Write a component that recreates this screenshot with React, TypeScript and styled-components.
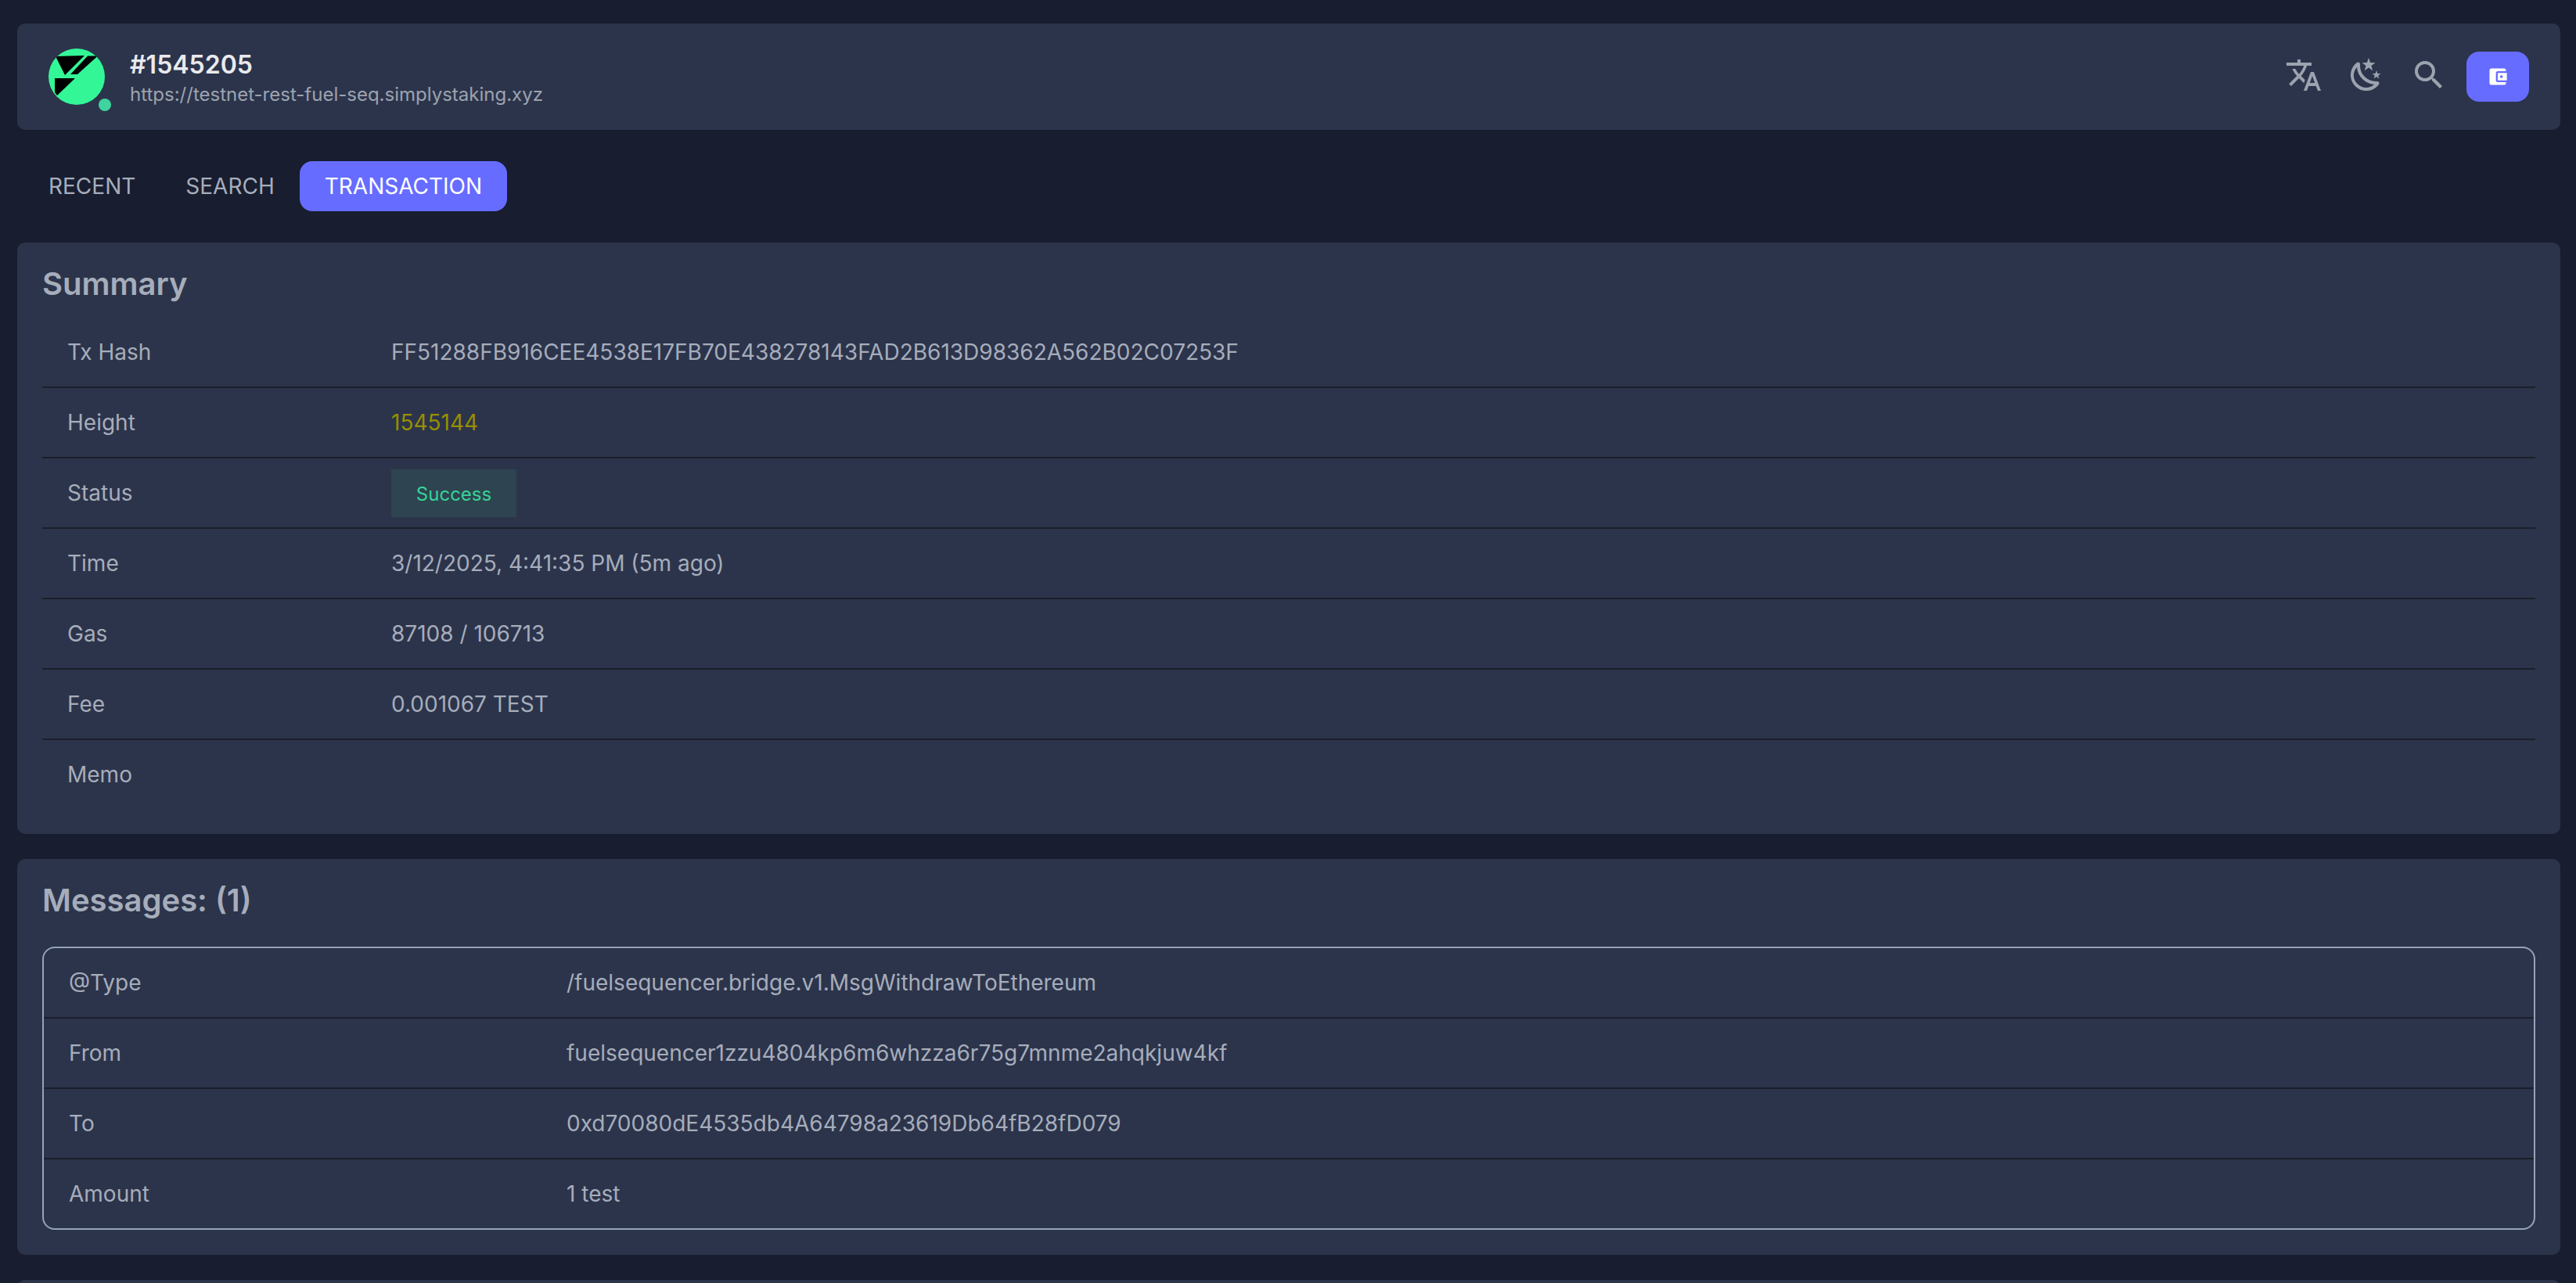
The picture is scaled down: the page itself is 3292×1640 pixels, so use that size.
import React from "react";
import styled, { createGlobalStyle } from "styled-components";

const Global = createGlobalStyle`
  html, body { margin: 0; padding: 0; background: #181d2f; }
  body { font-family: Inter, "Noto Sans", sans-serif; color: #a6adbb; -webkit-font-smoothing: antialiased; }
  * { box-sizing: border-box; }
`;

const Page = styled.div`
  height: 1640px;
  overflow: hidden;
  padding: 30px 20px 0 22px;
  display: flex;
  flex-direction: column;
`;

const Card = styled.section`
  background: #2c344b;
  border-radius: 10px;
  flex-shrink: 0;
`;

const TopBar = styled(Card)`
  height: 136px;
  display: flex;
  align-items: center;
  padding: 0 40px;
`;

const Brand = styled.div`
  display: flex;
  align-items: center;
  flex: 1;
  gap: 32px;
`;

const LogoWrap = styled.div`
  position: relative;
  width: 72px;
  height: 72px;
`;

const LogoSvg = styled.svg`
  display: block;
  width: 72px;
  height: 72px;
`;

const OnlineDot = styled.span`
  position: absolute;
  left: 64px;
  top: 64px;
  width: 16px;
  height: 16px;
  border-radius: 50%;
  background: #3fd39f;
`;

const BrandText = styled.div`
  display: flex;
  flex-direction: column;
  margin-top: 6px;
`;

const ChainHeight = styled.div`
  font-size: 32px;
  font-weight: 600;
  line-height: 40px;
  color: #e9eaee;
`;

const ChainUrl = styled.div`
  font-size: 24px;
  line-height: 36px;
  color: #9ca3af;
`;

const IconButton = styled.button`
  width: 80px;
  height: 64px;
  background: none;
  border: 0;
  padding: 0 0 4px;
  display: flex;
  align-items: center;
  justify-content: center;
  color: #9ca3af;
`;

const WalletButton = styled.button`
  width: 80px;
  height: 64px;
  margin-left: 8px;
  border: 0;
  padding: 0;
  border-radius: 16px;
  background: #666cff;
  color: #fff;
  display: flex;
  align-items: center;
  justify-content: center;
`;

const Tabs = styled.nav`
  display: flex;
  margin: 40px 0;
  padding-left: 8px;
`;

const Tab = styled.a<{ $active?: boolean }>`
  height: 64px;
  padding: 0 32px;
  border-radius: 16px;
  display: flex;
  align-items: center;
  font-size: 28px;
  background: ${(p) => (p.$active ? "#666cff" : "transparent")};
  color: ${(p) => (p.$active ? "#ffffff" : "#a6adbb")};
`;

const Panel = styled(Card)`
  padding: 32px;
  margin-bottom: 32px;
`;

const PanelTitle = styled.h2<{ $gap: number }>`
  margin: 0 0 ${(p) => p.$gap}px;
  font-size: 40px;
  line-height: 42px;
  font-weight: 600;
  color: #a6adbb;
`;

const MessageBox = styled.div`
  border: 2px solid #94a3b8;
  border-radius: 16px;
  overflow: hidden;
`;

const Row = styled.div<{ $labelWidth: number }>`
  display: grid;
  grid-template-columns: ${(p) => p.$labelWidth}px 1fr;
  align-items: center;
  height: 90px;
  border-bottom: 2px solid #1b1f2a;
  font-size: 28px;
  color: #a6adbb;
  &:last-child {
    height: 88px;
    border-bottom: 0;
  }
`;

const Cell = styled.div`
  padding: 0 32px;
`;

const HeightLink = styled.span`
  color: #968f00;
`;

const Badge = styled.span`
  display: flex;
  width: 160px;
  height: 61px;
  padding-top: 2px;
  align-items: center;
  justify-content: center;
  font-size: 24px;
  color: #36d399;
  background: #2e4450;
`;

const Stub = styled(Card)`
  height: 60px;
`;

const Path = ({ d, size = 48 }: { d: string; size?: number }) => (
  <svg width={size} height={size} viewBox="0 0 24 24" fill="currentColor">
    <path d={d} fillRule="evenodd" />
  </svg>
);

const TRANSLATE =
  "M12.87 15.07l-2.54-2.51.03-.03c1.74-1.94 2.98-4.17 3.71-6.53H17V4h-7V2H8v2H1v1.99h11.17C11.5 7.92 10.44 9.75 9 11.35 8.07 10.32 7.3 9.19 6.69 8h-2c.73 1.63 1.73 3.17 2.98 4.56l-5.09 5.02L4 19l5-5 3.11 3.11.76-2.04zM18.5 10h-2L12 22h2l1.12-3h4.75L21 22h2l-4.5-12zm-2.62 7l1.62-4.33L19.12 17h-3.24z";
const NIGHT =
  "M17.75,4.09L15.22,6.03L16.13,9.09L13.5,7.28L10.87,9.09L11.78,6.03L9.25,4.09L12.44,4L13.5,1L14.56,4L17.75,4.09M21.25,11L19.61,12.25L20.2,14.23L18.5,13.06L16.8,14.23L17.39,12.25L15.75,11L17.81,10.95L18.5,9L19.19,10.95L21.25,11M18.97,15.95C19.8,15.87 20.69,17.05 20.16,17.8C19.84,18.25 19.5,18.67 19.08,19.07C15.17,23 8.84,23 4.94,19.07C1.03,15.17 1.03,8.83 4.94,4.93C5.34,4.53 5.76,4.17 6.21,3.85C6.96,3.32 8.14,4.21 8.06,5.04C7.79,7.9 8.75,10.87 10.95,13.06C13.14,15.26 16.1,16.22 18.97,15.95M17.06,17.97C14.2,17.73 11.5,16.5 9.53,14.47C7.5,12.5 6.27,9.8 6.03,6.94C3.2,9.9 3.25,14.62 6.35,17.65C9.38,20.75 14.1,20.8 17.06,17.97Z";
const SEARCH =
  "M9.5,3A6.5,6.5 0 0,1 16,9.5C16,11.11 15.41,12.59 14.44,13.73L14.71,14H15.5L20.5,19L19,20.5L14,15.5V14.71L13.73,14.44C12.59,15.41 11.11,16 9.5,16A6.5,6.5 0 0,1 3,9.5A6.5,6.5 0 0,1 9.5,3M9.5,5C7,5 5,7 5,9.5C5,12 7,14 9.5,14C12,14 14,12 14,9.5C14,7 12,5 9.5,5Z";
const WALLET =
  "M21 18v1c0 1.1-.9 2-2 2H5c-1.11 0-2-.9-2-2V5c0-1.1.89-2 2-2h14c1.1 0 2 .9 2 2v1h-9c-1.11 0-2 .9-2 2v8c0 1.1.89 2 2 2h9zm-9-2h10V8H12v8zm4-2.5c-.83 0-1.5-.67-1.5-1.5s.67-1.5 1.5-1.5 1.5.67 1.5 1.5-.67 1.5-1.5 1.5z";

const Logo = () => (
  <LogoSvg viewBox="0 0 72 72">
    <defs>
      <clipPath id="logo-clip">
        <circle cx="36" cy="36" r="36" />
      </clipPath>
    </defs>
    <circle cx="36" cy="36" r="36" fill="#33f797" />
    <g clipPath="url(#logo-clip)" fill="#000">
      <polygon points="9,10 46,9 21,34" />
      <polygon points="50,9.5 63,9.5 37,33 28,33" />
      <polygon points="8,38 34,38 11,60 8,56" />
    </g>
  </LogoSvg>
);

const summary: [string, React.ReactNode][] = [
  ["Tx Hash", "FF51288FB916CEE4538E17FB70E438278143FAD2B613D98362A562B02C07253F"],
  ["Height", <HeightLink>1545144</HeightLink>],
  ["Status", <Badge>Success</Badge>],
  ["Time", "3/12/2025, 4:41:35 PM (5m ago)"],
  ["Gas", "87108 / 106713"],
  ["Fee", "0.001067 TEST"],
  ["Memo", ""],
];

const messages: [string, string][] = [
  ["@Type", "/fuelsequencer.bridge.v1.MsgWithdrawToEthereum"],
  ["From", "fuelsequencer1zzu4804kp6m6whzza6r75g7mnme2ahqkjuw4kf"],
  ["To", "0xd70080dE4535db4A64798a23619Db64fB28fD079"],
  ["Amount", "1 test"],
];

export default function App() {
  return (
    <Page>
      <Global />
      <TopBar as="header">
        <Brand>
          <LogoWrap>
            <Logo />
            <OnlineDot />
          </LogoWrap>
          <BrandText>
            <ChainHeight>#1545205</ChainHeight>
            <ChainUrl>https://testnet-rest-fuel-seq.simplystaking.xyz</ChainUrl>
          </BrandText>
        </Brand>
        <IconButton>
          <Path d={TRANSLATE} />
        </IconButton>
        <IconButton>
          <Path d={NIGHT} />
        </IconButton>
        <IconButton>
          <Path d={SEARCH} />
        </IconButton>
        <WalletButton>
          <Path d={WALLET} size={28} />
        </WalletButton>
      </TopBar>
      <Tabs>
        <Tab>RECENT</Tab>
        <Tab>SEARCH</Tab>
        <Tab $active>TRANSACTION</Tab>
      </Tabs>
      <Panel>
        <PanelTitle $gap={22}>Summary</PanelTitle>
        {summary.map(([label, value]) => (
          <Row key={label} $labelWidth={414}>
            <Cell>{label}</Cell>
            <Cell>{value}</Cell>
          </Row>
        ))}
      </Panel>
      <Panel>
        <PanelTitle $gap={38}>Messages: (1)</PanelTitle>
        <MessageBox>
          {messages.map(([label, value]) => (
            <Row key={label} $labelWidth={636}>
              <Cell>{label}</Cell>
              <Cell>{value}</Cell>
            </Row>
          ))}
        </MessageBox>
      </Panel>
      <Stub />
    </Page>
  );
}
